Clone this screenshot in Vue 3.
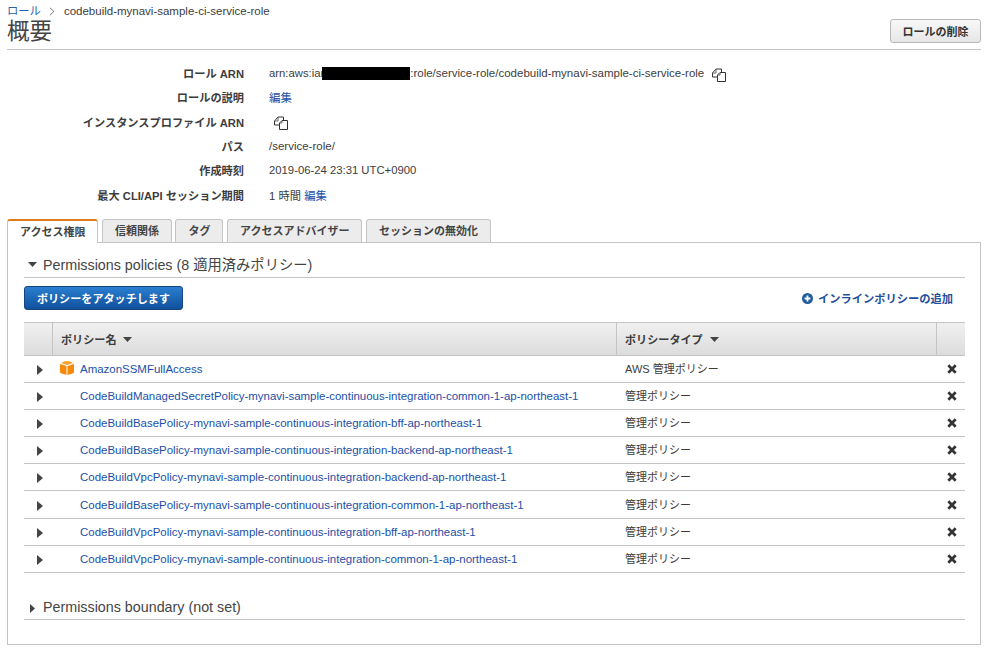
<template>
  <div class="page">
    <div class="head">
      <div class="head-left">
        <div class="crumbs">
          <a class="crumb-link">ロール</a>
          <svg class="crumb-sep" width="6" height="9" viewBox="0 0 6 9"><path d="M1 .8 4.8 4.5 1 8.2" fill="none" stroke="#777" stroke-width="1" /></svg>
          <span>codebuild-mynavi-sample-ci-service-role</span>
        </div>
        <h1 class="title">概要</h1>
      </div>
      <button type="button" class="btn-delete">ロールの削除</button>
    </div>

    <div class="details">
      <div class="detail-row">
        <div class="detail-label">ロール ARN</div>
        <div class="detail-value">
          <span class="arn-start">arn:aws:iar</span><span class="redact"></span><span>:role/service-role/codebuild-mynavi-sample-ci-service-role</span>
          <svg class="copy copy-arn" width="15" height="14" viewBox="0 0 15 14"><use href="#copy-icon" /></svg>
        </div>
      </div>
      <div class="detail-row">
        <div class="detail-label">ロールの説明</div>
        <div class="detail-value"><a class="link">編集</a></div>
      </div>
      <div class="detail-row">
        <div class="detail-label">インスタンスプロファイル ARN</div>
        <div class="detail-value">
          <svg class="copy copy-solo" width="15" height="14" viewBox="0 0 15 14">
            <defs>
              <g id="copy-icon" fill="#fff" stroke="#333" stroke-width="1">
                <path d="M.5 9V5L4 1H9.5V9Z" />
                <path d="M.8 5H4V1.2" fill="none" stroke="#666" />
                <path d="M8 4.5H13.5V13.5H5.5V7Z" />
                <path d="M5.7 7H8V4.7" fill="none" stroke="#666" />
              </g>
            </defs>
            <use href="#copy-icon" />
          </svg>
        </div>
      </div>
      <div class="detail-row">
        <div class="detail-label">パス</div>
        <div class="detail-value">/service-role/</div>
      </div>
      <div class="detail-row">
        <div class="detail-label">作成時刻</div>
        <div class="detail-value date">2019-06-24 23:31 UTC+0900</div>
      </div>
      <div class="detail-row">
        <div class="detail-label">最大 CLI/API セッション期間</div>
        <div class="detail-value date">1 時間 <a class="link">編集</a></div>
      </div>
    </div>

    <div class="tabs">
      <div v-for="(tab, i) in tabs" :key="tab" class="tab" :class="{ active: i === 0 }">{{ tab }}</div>
    </div>

    <div class="panel">
      <div class="section-head">
        <svg class="caret-down" width="9" height="5" viewBox="0 0 9 5"><path d="M0 0H9L4.5 5Z" fill="#444" /></svg>
        <span>Permissions policies (8 適用済みポリシー)</span>
      </div>

      <div class="actions">
        <button type="button" class="btn-primary">ポリシーをアタッチします</button>
        <a class="add-inline">
          <svg width="11" height="11" viewBox="0 0 11 11">
            <circle cx="5.5" cy="5.5" r="5.5" fill="#1f5d9f" />
            <path d="M5.5 2.6V8.4M2.6 5.5H8.4" stroke="#fff" stroke-width="1.8" />
          </svg>
          インラインポリシーの追加
        </a>
      </div>

      <div class="policy-table">
        <div class="thead">
          <div class="th th-toggle"></div>
          <div class="th th-name">
            ポリシー名
            <svg width="9" height="5" viewBox="0 0 9 5"><path d="M0 0H9L4.5 5Z" fill="#444" /></svg>
          </div>
          <div class="th th-type">
            ポリシータイプ
            <svg width="9" height="5" viewBox="0 0 9 5"><path d="M0 0H9L4.5 5Z" fill="#444" /></svg>
          </div>
          <div class="th th-remove"></div>
        </div>
        <div v-for="p in policies" :key="p.name" class="tr">
          <div class="td-toggle">
            <svg width="6" height="10" viewBox="0 0 6 10"><path d="M0 0 6 5 0 10Z" fill="#444" /></svg>
          </div>
          <div class="td-name">
            <svg v-if="p.aws" class="cube" width="14" height="14" viewBox="0 0 14 14">
              <path d="M4 .4 7 0 10 .4 13 2 7 4 1 2Z" fill="#f9a12e" />
              <path d="M0 3 6.5 5V14L1.5 12.6 0 11.5Z" fill="#f58a0b" />
              <path d="M14 3 7.5 5V14L12.5 12.6 14 11.5Z" fill="#f58a0b" />
            </svg>
            <a class="link">{{ p.name }}</a>
          </div>
          <div class="td-type">{{ p.aws ? 'AWS 管理ポリシー' : '管理ポリシー' }}</div>
          <div class="td-remove">
            <svg width="10" height="10" viewBox="0 0 10 10"><path d="M1.3 1.3 8.7 8.7M8.7 1.3 1.3 8.7" stroke="#333" stroke-width="2.7" /></svg>
          </div>
        </div>
      </div>

      <div class="section-head boundary">
        <svg class="caret-right" width="5" height="9" viewBox="0 0 5 9"><path d="M0 0 5 4.5 0 9Z" fill="#444" /></svg>
        <span>Permissions boundary (not set)</span>
      </div>
    </div>
  </div>
</template>

<script setup>
const tabs = ['アクセス権限', '信頼関係', 'タグ', 'アクセスアドバイザー', 'セッションの無効化']

const policies = [
  { name: 'AmazonSSMFullAccess', aws: true },
  { name: 'CodeBuildManagedSecretPolicy-mynavi-sample-continuous-integration-common-1-ap-northeast-1' },
  { name: 'CodeBuildBasePolicy-mynavi-sample-continuous-integration-bff-ap-northeast-1' },
  { name: 'CodeBuildBasePolicy-mynavi-sample-continuous-integration-backend-ap-northeast-1' },
  { name: 'CodeBuildVpcPolicy-mynavi-sample-continuous-integration-backend-ap-northeast-1' },
  { name: 'CodeBuildBasePolicy-mynavi-sample-continuous-integration-common-1-ap-northeast-1' },
  { name: 'CodeBuildVpcPolicy-mynavi-sample-continuous-integration-bff-ap-northeast-1' },
  { name: 'CodeBuildVpcPolicy-mynavi-sample-continuous-integration-common-1-ap-northeast-1' }
]
</script>

<style>
html, body { margin: 0; background: #fff; overflow: hidden; }
</style>

<style scoped>
.page { width: 989px; height: 654px; box-sizing: border-box; padding: 0 8px 0 7px; overflow: hidden; font-family: "Liberation Sans", "Noto Sans CJK JP", sans-serif; font-size: 11.5px; color: #3c3c3c; background: #fff; }
.head { height: 50px; box-sizing: border-box; border-bottom: 1px solid #c4c4c4; display: flex; justify-content: space-between; }
.crumbs { display: flex; align-items: center; gap: 8px; height: 22px; line-height: 22px; }
.crumb-link { color: #2a5ea8; font-size: 11.3px; }
.crumb-sep { margin: 1px 1px 0 0; }
.title { margin: -3px 0 0; font-size: 22.5px; font-weight: 400; line-height: 26px; color: #444; }
.btn-delete { width: 91px; height: 24px; margin-top: 19px; padding: 0; border: 1px solid #b8b8b8; border-radius: 3px; background: linear-gradient(#f8f8f8, #e6e6e6); color: #333; font: 700 11px "Liberation Sans", "Noto Sans CJK JP", sans-serif; }
.details { padding-top: 11px; height: 158px; box-sizing: border-box; }
.detail-row { display: flex; height: 24.3px; align-items: center; }
.detail-label { width: 237px; text-align: right; font-weight: 700; font-size: 11.2px; color: #3c3c3c; }
.detail-value { margin-left: 25px; display: flex; align-items: center; white-space: pre; }
.date { font-size: 11.3px; }
.arn-start { font-size: 11.3px; }
.redact { width: 88px; height: 13px; margin-left: -2px; background: #000; }
.link { color: #1a4fa8; }
.copy { display: block; }
.copy-arn { margin: 3px 0 0 8px; }
.copy-solo { margin: 3px 0 0 5px; }
.tabs { display: flex; gap: 3.5px; height: 34px; align-items: flex-end; }
.tab { height: 23px; box-sizing: border-box; padding: 0 12px; border: 1px solid #c4c4c4; border-bottom: 0; border-radius: 3px 3px 0 0; background: #ececec; font-weight: 700; font-size: 11px; line-height: 22px; color: #444; }
.tab.active { height: 24px; margin-bottom: -1px; border-top: 2px solid #e07b18; background: #fff; position: relative; z-index: 1; line-height: 23px; }
.panel { height: 403px; box-sizing: border-box; border: 1px solid #c4c4c4; padding: 8px 15px 0 16px; }
.section-head { height: 27px; box-sizing: border-box; border-bottom: 1px solid #c4c4c4; display: flex; align-items: center; font-size: 14.3px; color: #444; padding: 0 0 2px 4px; }
.caret-down { margin-right: 6px; margin-top: 3px; }
.caret-right { margin-right: 8px; margin-left: 2px; margin-top: 3px; }
.actions { display: flex; justify-content: space-between; margin-top: 8px; height: 24px; }
.btn-primary { width: 159px; height: 24px; padding: 0; border: 1px solid #15457e; border-radius: 3px; background: linear-gradient(#2a7fd0, #10509c); color: #fff; font: 700 11.1px "Liberation Sans", "Noto Sans CJK JP", sans-serif; }
.add-inline { display: flex; align-items: center; gap: 5px; margin-right: 12px; font-weight: 700; font-size: 11.25px; color: #1f4f9c; }
.policy-table { margin-top: 12px; }
.thead { display: flex; height: 34px; box-sizing: border-box; border: 1px solid #c4c4c4; border-width: 1px 0; background: linear-gradient(#f0f0f0, #dcdcdc); }
.th { box-sizing: border-box; display: flex; align-items: center; gap: 7px; font-weight: 700; font-size: 11.1px; color: #3c3c3c; border-right: 1px solid #c4c4c4; }
.th-toggle { width: 29px; }
.th-name { width: 564px; padding-left: 8px; }
.th-type { width: 320px; padding-left: 8px; }
.th-remove { flex: 1; border-right: 0; }
.tr { display: flex; height: 27.1px; box-sizing: border-box; border-bottom: 1px solid #c4c4c4; align-items: center; }
.td-toggle { width: 29px; padding-left: 13px; box-sizing: border-box; display: flex; padding-top: 2px; }
.td-name { width: 564px; display: flex; align-items: center; padding-left: 27px; box-sizing: border-box; position: relative; font-size: 11.47px; white-space: nowrap; }
.cube { position: absolute; left: 7px; top: -2px; }
.td-type { width: 320px; padding-left: 8px; box-sizing: border-box; margin-top: -2px; font-size: 11px; }
.td-remove { flex: 1; display: flex; justify-content: flex-end; padding-right: 8px; }
.boundary { margin-top: 20px; padding: 2px 0 0 4px; }
</style>
